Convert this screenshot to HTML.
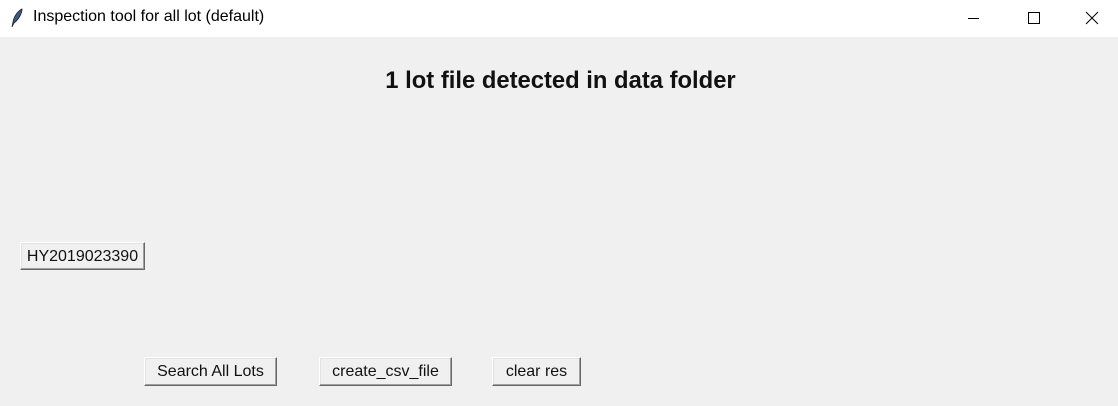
<!DOCTYPE html><html><head><style>
body{margin:0;width:1118px;height:406px;background:#f0f0f0;font-family:"Liberation Sans",sans-serif;position:relative;overflow:hidden}
.tb{position:absolute;left:0;top:0;width:1118px;height:37px;background:#fff}
.tt{position:absolute;left:33px;top:8px;font-size:16px;color:#000}
.b{position:absolute;box-sizing:border-box;background:#f0f0f0;border:1px solid;border-color:#fff #696969 #696969 #fff;box-shadow:inset -1px -1px 0 #a0a0a0,inset 1px 1px 0 #e3e3e3;font-size:16px;color:#111;text-align:center;line-height:28px}
h1{position:absolute;left:0;width:1121px;top:67px;margin:0;text-align:center;font-size:23.8px;font-weight:bold;color:#111}
</style></head><body>
<div class="tb">
<svg style="position:absolute;left:10px;top:8px" width="14" height="20" viewBox="0 0 14 20"><path d="M12 1 C8 3 4 8 3 14 L2 19 L4 15 C8 12 12 6 12 1Z" fill="#3a5a8a" stroke="#222" stroke-width="0.8"/></svg>
<div class="tt">Inspection tool for all lot (default)</div>
<svg style="position:absolute;left:960px;top:10px" width="150" height="18"><line x1="8" y1="8.5" x2="19" y2="8.5" stroke="#000"/><rect x="68.5" y="2.5" width="11" height="11" fill="none" stroke="#000"/><path d="M126 2 L138 14 M138 2 L126 14" stroke="#000"/></svg>
</div>
<h1>1 lot file detected in data folder</h1>
<div class="b" style="left:20px;top:242px;width:125px;height:28px">HY2019023390</div>
<div class="b" style="left:144px;top:357px;width:133px;height:29px">Search All Lots</div>
<div class="b" style="left:319px;top:357px;width:133px;height:29px">create_csv_file</div>
<div class="b" style="left:492px;top:357px;width:89px;height:29px">clear res</div>
</body></html>
